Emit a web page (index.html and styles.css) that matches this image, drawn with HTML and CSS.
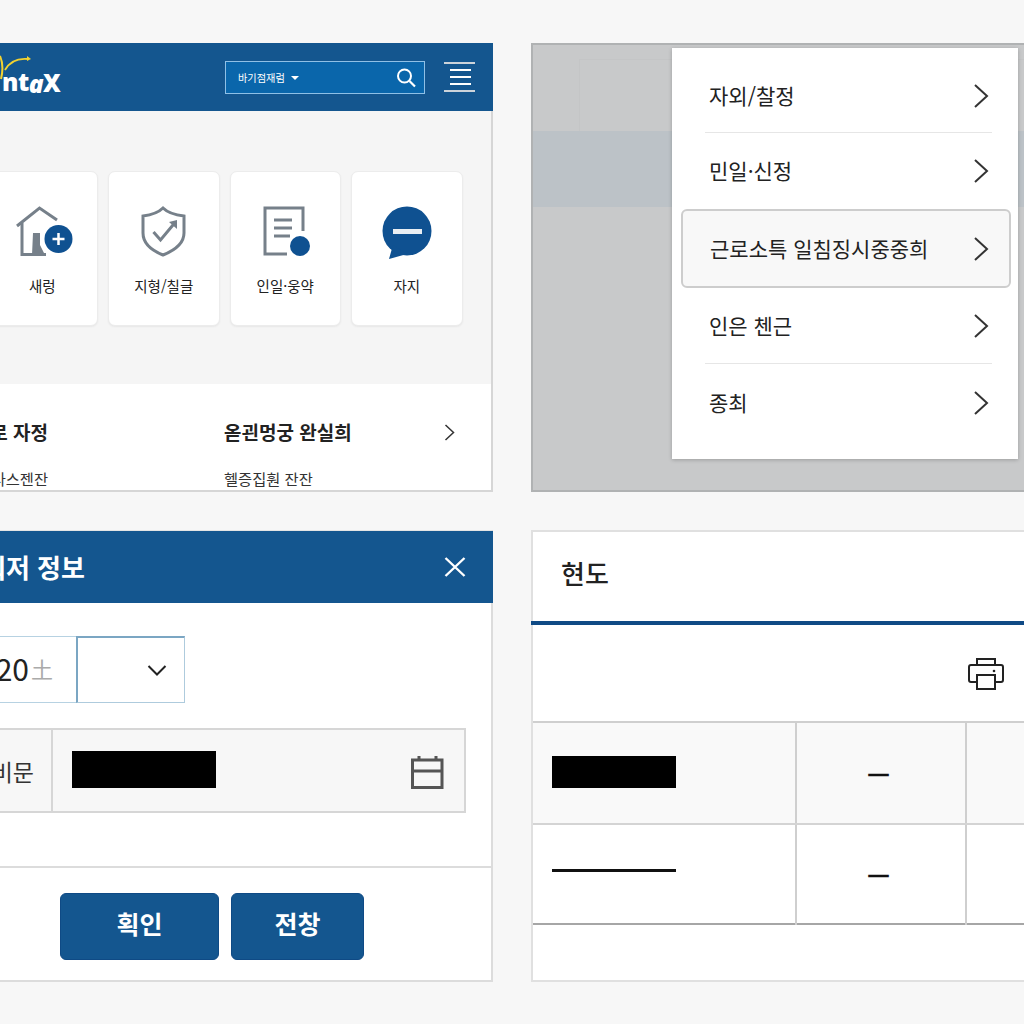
FILE: index.html
```html
<!DOCTYPE html>
<html lang="ko">
<head>
  <meta charset="UTF-8" />
  <title>Hometax 화면 모음</title>
  <meta name="viewport" content="width=device-width, initial-scale=1.0">
  <link rel="stylesheet" href="styles.css">
</head>
<body>
  <div class="board">

    <!-- home -->
    <section class="panel home">
      <header class="top-bar">
        <div class="logo">
          <svg class="logo-arc" width="40" height="34" viewBox="0 0 40 34">
            <path d="M0 1 C3 8 3 16 1 24" fill="none" stroke="#f2d230" stroke-width="2"/>
            <path d="M5 15 C10 6 18 3 28 4" fill="none" stroke="#f2d230" stroke-width="1.8"/>
            <path d="M27 1 L31 4 L27 6 Z" fill="#f2d230"/>
          </svg>
          <span>nt</span><span class="logo-a">a</span><span class="logo-x">X</span>
        </div>
        <div class="search">
          <span class="search-label">바기점재럼</span>
          <span class="search-caret"></span>
          <svg class="search-icon" width="22" height="22" viewBox="0 0 22 22">
            <circle cx="9.5" cy="9" r="6.5" fill="none" stroke="#fff" stroke-width="2"/>
            <path d="M14.5 14 L20 19.5" stroke="#fff" stroke-width="2.2"/>
          </svg>
        </div>
        <svg class="burger" width="31" height="30" viewBox="0 0 31 30">
          <path d="M0 1 H31 M0 29 H31" stroke="#ccd3da" stroke-width="2"/>
          <path d="M6 8 H27 M6 15 H27 M6 22 H27" stroke="#fff" stroke-width="2"/>
        </svg>
      </header>

      <div class="quick-area">
        <div class="card">
          <svg class="card-icon" width="64" height="54" viewBox="0 0 64 54">
            <path d="M7 21 L29.5 3 L47 15" fill="none" stroke="#76808a" stroke-width="3"/>
            <path d="M12 18 V49.5 H36" fill="none" stroke="#76808a" stroke-width="3"/>
            <path d="M23 28 H30 V40 L35 50 H22 Z" fill="#76808a"/>
            <circle cx="48.5" cy="34" r="14" fill="#0f5191"/>
            <path d="M42.5 34 H54.5 M48.5 28 V40" stroke="#fff" stroke-width="2.5"/>
          </svg>
          <span class="card-label">새렁</span>
        </div>
        <div class="card">
          <svg class="card-icon" width="64" height="54" viewBox="0 0 64 54">
            <path d="M31 3 C26 8 19 10 11 11 V28 C11 39 21 46 31 50 C41 46 52 39 52 28 V11 C43 10 36 8 31 3 Z" fill="none" stroke="#76808a" stroke-width="3"/>
            <path d="M21.5 27 L28.5 35 L43.5 17" fill="none" stroke="#76808a" stroke-width="3"/>
            <path d="M37 17 L45 15 L45 24 Z" fill="#76808a"/>
          </svg>
          <span class="card-label">지형/칠글</span>
        </div>
        <div class="card">
          <svg class="card-icon" width="64" height="54" viewBox="0 0 64 54">
            <path d="M50 26 V3 H12 V49 H34" fill="none" stroke="#76808a" stroke-width="3"/>
            <path d="M21 15 H39 M21 23 H39 M21 31 H37" stroke="#76808a" stroke-width="3"/>
            <circle cx="47" cy="41" r="10" fill="#0f5191"/>
          </svg>
          <span class="card-label">인일·웅약</span>
        </div>
        <div class="card">
          <svg class="card-icon" width="64" height="54" viewBox="0 0 64 54">
            <circle cx="32" cy="26" r="24.5" fill="#0f5191"/>
            <path d="M18 40 L14 54 L32 49 Z" fill="#0f5191"/>
            <rect x="18" y="24" width="29" height="5" fill="#e9eef3"/>
          </svg>
          <span class="card-label">자지</span>
        </div>
      </div>

      <div class="link-area">
        <div class="link-left">
          <div class="link-title">로 자정</div>
          <div class="link-sub">사스젠잔</div>
        </div>
        <div class="link-right">
          <div class="link-title">옫괸멍궁 완실희</div>
          <div class="link-sub">헬증집훤 잔잔</div>
        </div>
        <svg class="link-arrow" width="11" height="17" viewBox="0 0 11 17">
          <path d="M1.5 1 L9.5 8.5 L1.5 16" fill="none" stroke="#333" stroke-width="1.5"/>
        </svg>
      </div>
    </section>

    <!-- menu over dimmed page -->
    <section class="panel dimmed">
      <div class="dim-top"><div class="dim-ghost"></div></div>
      <div class="dim-band"></div>
      <div class="dim-rest">
        <i class="stripe"></i>
        <i class="stripe gap-a"></i>
        <i class="stripe gap-b"></i>
        <i class="stripe gap-c"></i>
      </div>

      <nav class="menu">
        <a class="menu-item lined first">자외/찰정
          <svg width="16" height="26" viewBox="0 0 16 26"><path d="M2 2 L14 13 L2 24" fill="none" stroke="#333" stroke-width="2"/></svg>
        </a>
        <a class="menu-item">민일·신정
          <svg width="16" height="26" viewBox="0 0 16 26"><path d="M2 2 L14 13 L2 24" fill="none" stroke="#333" stroke-width="2"/></svg>
        </a>
        <a class="menu-item active">근로소특 일침징시중중희
          <svg width="16" height="26" viewBox="0 0 16 26"><path d="M2 2 L14 13 L2 24" fill="none" stroke="#333" stroke-width="2"/></svg>
        </a>
        <a class="menu-item lined">인은 첸근
          <svg width="16" height="26" viewBox="0 0 16 26"><path d="M2 2 L14 13 L2 24" fill="none" stroke="#333" stroke-width="2"/></svg>
        </a>
        <a class="menu-item last">종최
          <svg width="16" height="26" viewBox="0 0 16 26"><path d="M2 2 L14 13 L2 24" fill="none" stroke="#333" stroke-width="2"/></svg>
        </a>
      </nav>
    </section>

    <!-- dialog -->
    <section class="panel dialog">
      <header class="dialog-head">
        <h2 class="dialog-title">뤄저 정보</h2>
        <svg class="dialog-close" width="22" height="20" viewBox="0 0 22 20">
          <path d="M1.5 1 L20.5 19 M20.5 1 L1.5 19" stroke="#fff" stroke-width="2.4"/>
        </svg>
      </header>

      <div class="dialog-body">
        <div class="year-row">
          <div class="year-input"><span class="year-num">20</span><span class="year-unit">土</span></div>
          <div class="year-select">
            <svg width="20" height="11" viewBox="0 0 20 11"><path d="M1.5 1 L10 9.5 L18.5 1" fill="none" stroke="#222" stroke-width="2"/></svg>
          </div>
        </div>
        <div class="date-row">
          <div class="date-label">비문</div>
          <div class="date-value">
            <div class="redact"></div>
            <svg class="date-icon" width="34" height="34" viewBox="0 0 34 34">
              <path d="M2.5 5 H32 V32.5 H2.5 Z M2.5 16 H32" fill="none" stroke="#555" stroke-width="3"/>
              <path d="M9 1 V5 M26 1 V5" stroke="#555" stroke-width="3"/>
            </svg>
          </div>
        </div>
      </div>

      <footer class="dialog-foot">
        <button class="btn wide">획인</button>
        <button class="btn">전창</button>
      </footer>
    </section>

    <!-- table -->
    <section class="panel report">
      <h2 class="report-title">현도</h2>
      <div class="report-tools">
        <svg width="36" height="34" viewBox="0 0 36 34">
          <path d="M9 9 V3 H27 V9" fill="none" stroke="#222" stroke-width="2"/>
          <path d="M9 26 H3 Q1 26 1 24 V11 Q1 9 3 9 H33 Q35 9 35 11 V24 Q35 26 33 26 H27" fill="none" stroke="#222" stroke-width="2"/>
          <rect x="9" y="19" width="18" height="14" fill="none" stroke="#222" stroke-width="2"/>
          <circle cx="26" cy="15" r="1.3" fill="#222"/>
        </svg>
      </div>
      <table class="report-table">
        <colgroup><col class="col-a"><col class="col-b"><col></colgroup>
        <tr class="shaded">
          <td><div class="redact small"></div></td>
          <td class="dash">—</td>
          <td></td>
        </tr>
        <tr class="plain">
          <td><div class="rule"></div></td>
          <td class="dash">—</td>
          <td></td>
        </tr>
      </table>
    </section>

  </div>
</body>
</html>
```

FILE: styles.css
```css
html, body {
  margin: 0;
  height: 1024px;
  overflow: hidden;
  background: #f7f7f7;
  color: #222;
  font-family: "Noto Sans CJK KR", "Noto Sans", sans-serif;
}

.board {
  display: grid;
  grid-template-columns: 493px 520px;
  grid-template-rows: 449px 452px;
  column-gap: 38px;
  row-gap: 38px;
  padding-top: 43px;
}

.panel {
  box-sizing: border-box;
  position: relative;
  display: flex;
  flex-direction: column;
}

/* home */
.home {
  background: #f5f5f5;
  border-right: 2px solid #d6d6d6;
  border-bottom: 2px solid #d6d6d6;
}
.top-bar {
  flex: none;
  display: flex;
  align-items: center;
  height: 68px;
  margin-right: -2px;
  background: #14568f;
}
.logo {
  position: relative;
  display: flex;
  align-items: baseline;
  margin: 10px 0 0 2px;
  font-family: "Open Sans", sans-serif;
  font-weight: 800;
  font-size: 24.5px;
  line-height: 30px;
  letter-spacing: -0.5px;
  color: #fff;
}
.logo-arc {
  position: absolute;
  left: -2px;
  top: -12px;
}
.logo-a {
  font-style: italic;
  transform: translateY(2px);
}
.logo-x {
  transform: translateY(1px);
}
.search {
  box-sizing: border-box;
  display: flex;
  align-items: center;
  width: 200px;
  height: 33px;
  margin: 1px 19px 0 auto;
  padding: 0 7px 0 12px;
  background: #0a66ab;
  border: 1px solid #8fc0e6;
}
.search-label {
  font-size: 10.2px;
  color: #fff;
}
.search-caret {
  width: 0;
  height: 0;
  margin-left: 6px;
  border-left: 4px solid transparent;
  border-right: 4px solid transparent;
  border-top: 4px solid #fff;
}
.search-icon {
  margin-left: auto;
}
.burger {
  margin-right: 18px;
}
.quick-area {
  flex: none;
  display: flex;
  gap: 10px;
  height: 273px;
  box-sizing: border-box;
  padding-top: 60px;
  margin-left: -13.5px;
}
.card {
  box-sizing: border-box;
  display: flex;
  flex-direction: column;
  align-items: center;
  width: 111.5px;
  height: 155px;
  padding-top: 33px;
  background: #fff;
  border: 1px solid #ececec;
  border-radius: 7px;
  box-shadow: 0 1px 2px rgba(0,0,0,0.06);
}
.card-icon {
  flex: none;
}
.card-label {
  margin-top: 17px;
  font-size: 14.5px;
  line-height: 20px;
  color: #222;
}
.link-area {
  flex: 1;
  display: grid;
  grid-template-columns: 48px 176px 1fr;
  background: #fff;
  padding-top: 33px;
  overflow: hidden;
}
.link-left {
  grid-column: 1;
}
.link-left .link-title,
.link-left .link-sub {
  display: flex;
  justify-content: flex-end;
}
.link-right {
  grid-column: 3;
}
.link-title {
  font-size: 19px;
  font-weight: 700;
  line-height: 30px;
  white-space: nowrap;
  color: #222;
}
.link-sub {
  margin-top: 16px;
  font-size: 15.3px;
  line-height: 30px;
  white-space: nowrap;
  color: #333;
}
.link-arrow {
  position: absolute;
  left: 444px;
  top: 381px;
}

/* menu over dimmed page */
.dimmed {
  background: #c8c9ca;
  border: 2px solid #b0b2b3;
  border-right: 0;
}
.dim-top {
  flex: none;
  box-sizing: border-box;
  height: 86px;
  padding: 14px 0 0 46px;
}
.dim-ghost {
  height: 100%;
  border-top: 1px solid #c4c5c6;
  border-left: 1px solid #c4c5c6;
  box-sizing: border-box;
}
.dim-band {
  flex: none;
  height: 76px;
  background: #bcc2c7;
}
.dim-rest {
  flex: 1;
  display: flex;
  flex-direction: column;
  align-items: flex-end;
  padding-top: 101px;
}
.stripe {
  width: 6px;
  height: 2px;
  background: #7f9ca8;
}
.stripe.gap-a { margin-top: 16px; }
.stripe.gap-b { margin-top: 28px; }
.stripe.gap-c { margin-top: 30px; }
.menu {
  position: absolute;
  left: 139px;
  top: 3px;
  width: 346px;
  box-sizing: border-box;
  padding: 10px 0 19px;
  background: #fff;
  box-shadow: 0 1px 4px rgba(0,0,0,0.22);
}
.menu-item {
  display: flex;
  align-items: center;
  justify-content: space-between;
  box-sizing: border-box;
  height: 76px;
  padding: 0 29px 2px 37px;
  font-size: 21px;
  color: #222;
  position: relative;
}
.menu-item svg {
  margin-top: 2px;
}
.menu-item.first {
  height: 75px;
  padding-bottom: 1px;
}
.menu-item.last {
  margin-top: 1px;
  margin-bottom: -1px;
}
.menu-item.lined::after {
  content: "";
  position: absolute;
  left: 33px;
  right: 26px;
  bottom: 0;
  height: 1px;
  background: #e6e6e6;
}
.menu-item.active {
  height: 79px;
  margin: 0 7px 0 9px;
  padding: 0 20px 2px 27px;
  background: #f8f8f8;
  border: 2px solid #cdcdcd;
  border-radius: 6px;
}

/* dialog */
.dialog {
  background: #fff;
  border-top: 1px solid #e4e4e4;
  border-right: 2px solid #dcdcdc;
  border-bottom: 2px solid #dcdcdc;
}
.dialog-head {
  flex: none;
  display: flex;
  align-items: center;
  justify-content: space-between;
  height: 72px;
  margin-right: -2px;
  padding-right: 27px;
  background: #14568f;
}
.dialog-title {
  margin: 0 0 0 -18px;
  font-size: 26px;
  font-weight: 700;
  line-height: 36px;
  white-space: nowrap;
  color: #fff;
}
.dialog-body {
  flex: 1;
  padding-top: 33px;
}
.year-row {
  display: flex;
  height: 67px;
  margin-left: -2px;
}
.year-input {
  box-sizing: border-box;
  display: flex;
  align-items: center;
  justify-content: flex-end;
  gap: 2px;
  width: 78px;
  padding: 0 23px 3px 0;
  border: 1px solid #b7d2e2;
  border-right: 0;
}
.year-num {
  font-size: 30px;
  color: #222;
}
.year-unit {
  font-size: 22px;
  color: #aaa;
}
.year-select {
  box-sizing: border-box;
  display: flex;
  align-items: center;
  justify-content: flex-end;
  width: 109px;
  padding-right: 17px;
  border: 1px solid #aecbdd;
  border-top: 2px solid #7ba6c3;
  border-left: 2px solid #7ba6c3;
}
.date-row {
  display: flex;
  width: 468px;
  height: 85px;
  margin: 25px 0 0 -2px;
  background: #f7f7f7;
  border: 2px solid #d6d6d6;
  box-sizing: border-box;
}
.date-label {
  box-sizing: border-box;
  display: flex;
  align-items: center;
  justify-content: flex-end;
  width: 53px;
  padding-right: 17px;
  font-size: 23px;
  white-space: nowrap;
  color: #333;
  border-right: 2px solid #d6d6d6;
}
.date-value {
  flex: 1;
  display: flex;
  align-items: center;
  padding: 0 20px 0 19px;
}
.redact {
  width: 144px;
  height: 37px;
  margin-top: -3px;
  background: #000;
}
.date-icon {
  margin: 2px 0 0 auto;
}
.dialog-foot {
  flex: none;
  display: flex;
  gap: 12px;
  height: 114px;
  box-sizing: border-box;
  padding: 25px 0 0 60px;
  border-top: 2px solid #dcdcdc;
}
.btn {
  width: 133px;
  height: 67px;
  padding: 0 0 7px;
  font-family: inherit;
  font-size: 25px;
  font-weight: 700;
  color: #fff;
  background: #14568f;
  border: 1px solid #0f4a85;
  border-radius: 6px;
}
.btn.wide {
  width: 159px;
}

/* table */
.report {
  background: #fff;
  border: 2px solid #e0e0e0;
  border-right: 0;
}
.report-title {
  flex: none;
  box-sizing: border-box;
  height: 89px;
  margin: 0;
  padding: 23px 0 0 28px;
  font-size: 26px;
  font-weight: 500;
  line-height: 36px;
  color: #222;
}
.report-tools {
  flex: none;
  display: flex;
  justify-content: flex-end;
  box-sizing: border-box;
  height: 100px;
  margin-left: -2px;
  padding: 31px 47px 0 0;
  border-top: 4px solid #0f4a85;
}
.report-table {
  width: 518px;
  border-collapse: collapse;
  table-layout: fixed;
  border-top: 2px solid #cfcfcf;
  border-bottom: 2px solid #a6a6a6;
}
.col-a { width: 263px; }
.col-b { width: 170px; }
.report-table td {
  padding: 0 0 0 19px;
  border-right: 2px solid #cfcfcf;
}
.shaded td {
  height: 100px;
  background: #f9f9f9;
  border-bottom: 2px solid #d4d4d4;
}
.plain td {
  height: 98px;
}
.redact.small {
  width: 124px;
  height: 32px;
  margin-top: -3px;
}
.rule {
  width: 124px;
  height: 3px;
  margin-top: -5px;
  background: #111;
}
.report-table td.dash {
  padding: 0 5px 0 0;
  text-align: center;
  font-family: "Liberation Sans", sans-serif;
  font-size: 20px;
  font-weight: 700;
  color: #111;
  -webkit-text-stroke: 0.6px #111;
}
```
